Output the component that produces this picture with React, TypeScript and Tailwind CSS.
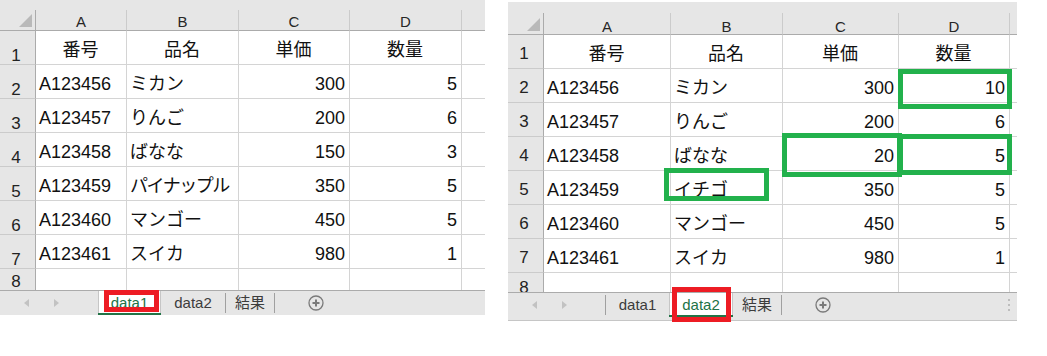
import React from 'react';

const font = "font-['Liberation_Sans','Noto_Sans_CJK_JP',sans-serif]";

const before = [
  ['番号', '品名', '単価', '数量'],
  ['A123456', 'ミカン', '300', '5'],
  ['A123457', 'りんご', '200', '6'],
  ['A123458', 'ばなな', '150', '3'],
  ['A123459', 'パイナップル', '350', '5'],
  ['A123460', 'マンゴー', '450', '5'],
  ['A123461', 'スイカ', '980', '1'],
];

const after = [
  ['番号', '品名', '単価', '数量'],
  ['A123456', 'ミカン', '300', '10'],
  ['A123457', 'りんご', '200', '6'],
  ['A123458', 'ばなな', '20', '5'],
  ['A123459', 'イチゴ', '350', '5'],
  ['A123460', 'マンゴー', '450', '5'],
  ['A123461', 'スイカ', '980', '1'],
];

// green marks around edited cells, keyed "row-col"
const edits: Record<string, string> = {
  '1-3': '-left-px top-0 w-[114px] h-[40px]',
  '3-2': '-left-px -top-[4px] w-[120px] h-[44px]',
  '3-3': '-left-px -top-[3px] w-[114px] h-[41px]',
  '4-1': '-left-[7px] -top-[3px] w-[105px] h-[33px]',
};

type SheetProps = {
  cols: string;
  rows: string[][];
  band: string;
  head: string;
  letterPad: string;
  numText: string;
  row8: string;
  row8Num: string;
  bar: string;
  nav: string;
  active: number;
  red: string;
  marks?: Record<string, string>;
  dots?: boolean;
  className?: string;
};

const Tri = ({ dir }: { dir: 'l' | 'r' }) => (
  <svg width="5" height="8" viewBox="0 0 5 8">
    <polygon points={dir === 'l' ? '5,0 5,8 0,4' : '0,0 0,8 5,4'} fill="#c2c2c2" />
  </svg>
);

const Sep = () => <div className="w-px h-[20px] self-center bg-[#a0a0a0]" />;

const Sheet = ({ cols, rows, band, head, letterPad, numText, row8, row8Num, bar, nav, active, red, marks = {}, dots, className = '' }: SheetProps) => {
  const tabs = ['data1', 'data2', '結果'];
  const widths = ['w-[63px]', 'w-[64px]', 'w-[48px]'];

  return (
    <div className={`flex flex-col ${className}`}>
      <div className={`${band} bg-[#e6e6e6]`} />
      <div className={`grid ${cols}`}>
        {/* column headers */}
        <div className={`relative ${head} bg-[#e6e6e6] border-r border-b border-[#ababab]`}>
          <svg className="absolute right-[3px] bottom-[3px]" width="13" height="13" viewBox="0 0 13 13">
            <polygon points="13,0 13,13 0,13" fill="#b9b9b9" />
          </svg>
        </div>
        {['A', 'B', 'C', 'D'].map((l) => (
          <div key={l} className={`flex items-end justify-center bg-[#e6e6e6] border-r border-b border-r-[#cbcbcb] border-b-[#ababab] ${letterPad}`}>
            <span className="text-[15px] leading-[14px] text-[#262626]">{l}</span>
          </div>
        ))}
        <div className="bg-[#e6e6e6] border-b border-[#ababab]" />

        {rows.map((r, i) => (
          <React.Fragment key={i}>
            <div className="h-[34px] flex items-end justify-center pr-[3px] bg-[#e6e6e6] border-r border-b border-r-[#ababab] border-b-[#cbcbcb]">
              <span className={`text-[17px] text-[#222] ${numText}`}>{i + 1}</span>
            </div>
            {r.map((v, j) => {
              const align = i === 0 ? 'justify-center' : j >= 2 ? 'justify-end' : 'justify-start';
              const mark = marks[`${i}-${j}`];
              const tight = v.length > 5 && j === 1 ? 'tracking-[-1.5px]' : '';
              return (
                <div key={j} className={`relative h-[34px] flex items-end pl-[3px] pr-[4px] pb-1 bg-white border-r border-b border-[#d4d4d4] ${align}`}>
                  <span className={`text-[18px] leading-5 text-[#111] whitespace-nowrap ${tight}`}>{v}</span>
                  {mark && <div className={`absolute z-10 border-[5px] border-[#22b14c] ${mark}`} />}
                </div>
              );
            })}
            <div className="bg-white border-b border-[#d4d4d4]" />
          </React.Fragment>
        ))}

        {/* row 8, cut off by the tab strip */}
        <div className={`${row8} overflow-hidden flex items-end justify-center pr-[3px] bg-[#e6e6e6] border-r border-[#ababab]`}>
          <span className={`text-[17px] text-[#222] ${row8Num}`}>8</span>
        </div>
        {[0, 1, 2, 3].map((j) => (
          <div key={j} className="bg-white border-r border-[#d4d4d4]" />
        ))}
        <div className="bg-white" />
      </div>

      {/* sheet tabs */}
      <div className={`flex bg-[#e6e6e6] border-t border-[#ababab] ${bar}`}>
        <div className={`flex items-center pl-[24px] gap-[25px] ${nav}`}>
          <Tri dir="l" />
          <Tri dir="r" />
        </div>
        {active !== 0 && <Sep />}
        {tabs.map((t, k) => (
          <React.Fragment key={t}>
            {k === active ? (
              <div className={`relative flex items-center justify-center bg-white border-x border-[#c6c6c6] ${widths[k]}`}>
                <span className="text-[15px] text-[#217346]">{t}</span>
                <div className="absolute -left-px -right-px bottom-0 h-[2px] bg-[#217346]" />
                <div className={`absolute z-10 border-[5px] border-[#ed1c24] ${red}`} />
              </div>
            ) : (
              <div className={`flex items-center justify-center ${widths[k]}`}>
                <span className="text-[15px] text-[#3c3c3c]">{t}</span>
              </div>
            )}
            {k !== active && k + 1 !== active && k < tabs.length - 1 && <Sep />}
          </React.Fragment>
        ))}
        <Sep />
        <div className="flex items-center ml-[33px]">
          <svg width="16" height="16" viewBox="0 0 16 16">
            <circle cx="8" cy="8" r="7" fill="none" stroke="#7a7a7a" strokeWidth="1.3" />
            <path d="M4.5 8h7M8 4.5v7" stroke="#7a7a7a" strokeWidth="2" />
          </svg>
        </div>
        {dots && (
          <div className="ml-auto mr-[7px] flex flex-col justify-center gap-[3px]">
            <div className="w-[2px] h-[2px] bg-[#bdbdbd]" />
            <div className="w-[2px] h-[2px] bg-[#bdbdbd]" />
            <div className="w-[2px] h-[2px] bg-[#bdbdbd]" />
          </div>
        )}
      </div>
    </div>
  );
}

export default function App() {
  return (
    <div className={`w-[1047px] h-[356px] bg-white flex items-start gap-[23px] ${font}`}>
      <Sheet
        className="w-[485px]"
        cols="grid-cols-[36px_91px_112px_111px_112px_23px]"
        rows={before}
        band="h-[10px]"
        head="h-[21px]"
        letterPad="pb-[1px]"
        numText="leading-[14px] pb-[1px]"
        row8="h-[21px]"
        row8Num="leading-[14px] pb-[1px]"
        bar="h-[25px]"
        nav="w-[98px]"
        active={0}
        red="left-[5px] -top-[1px] w-[55px] h-[22px]"
      />
      <Sheet
        className="w-[509px] mt-[2px]"
        cols="grid-cols-[36px_127px_112px_116px_111px_7px]"
        rows={after}
        band="h-[11px]"
        head="h-[22px]"
        letterPad="pb-0"
        numText="leading-5 pb-1"
        row8="h-[19px]"
        row8Num="leading-5 -mb-[6px]"
        bar="h-[29px] pb-[3px] border-b border-b-[#c6c6c6]"
        nav="w-[97px]"
        active={1}
        red="left-[2px] -top-[6px] w-[59px] h-[35px]"
        marks={edits}
        dots
      />
    </div>
  );
}
